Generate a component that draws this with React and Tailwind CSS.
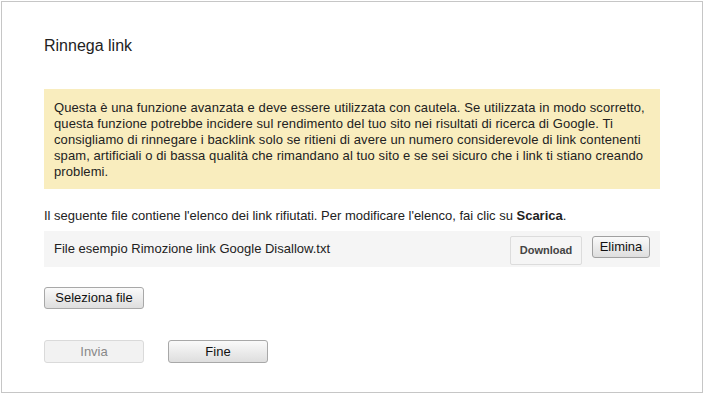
import React from 'react';

const App = () => {
  return (
    <div className="w-[705px] h-[395px] bg-white pl-px pt-px" style={{ fontFamily: '"Liberation Sans", Arial, sans-serif' }}>
      <div className="w-[702px] h-[392px] border border-[#c6c6c6] pl-[42px] pr-[42px] pt-[34px] text-[#222]">
        <h1 className="text-[16px] leading-[20px] font-normal text-[#222]">Rinnega link</h1>

        <div className="mt-[33px] w-[616px] h-[100px] bg-[#f9edbe] pl-[10px] pr-[6px] pt-[11px] text-[13px] leading-[16px] tracking-[0.09px] text-[#222]">
          Questa è una funzione avanzata e deve essere utilizzata con cautela. Se utilizzata in modo scorretto, questa funzione potrebbe incidere sul rendimento del tuo sito nei risultati di ricerca di Google. Ti consigliamo di rinnegare i backlink solo se ritieni di avere un numero considerevole di link contenenti spam, artificiali o di bassa qualità che rimandano al tuo sito e se sei sicuro che i link ti stiano creando problemi.
        </div>

        <p className="mt-[19px] text-[13px] leading-[16px]">
          Il seguente file contiene l'elenco dei link rifiutati. Per modificare l'elenco, fai clic su <b>Scarica</b>.
        </p>

        <div className="mt-[7px] w-[616px] h-[36px] bg-[#f5f5f5] flex items-center pl-[10px] pr-[10px]">
          <span className="text-[13px] flex-1">File esempio Rimozione link Google Disallow.txt</span>
          <button className="h-[29px] w-[72px] mt-[2px] rounded-[2px] border border-[#dcdcdc] bg-[#f5f5f5] text-[11px] font-bold text-[#444]">Download</button>
          <button className="ml-[10px] h-[22px] w-[58px] mb-[4px] rounded-[3px] border border-[#a0a0a0] bg-gradient-to-b from-[#fafafa] to-[#dedede] text-[13px] text-[#111]">Elimina</button>
        </div>

        <button className="mt-[20px] block h-[22px] w-[100px] rounded-[3px] border border-[#a8a8a8] bg-gradient-to-b from-[#fafafa] to-[#dedede] text-[13px] text-[#111]">Seleziona file</button>

        <div className="mt-[31px] flex gap-[24px]">
          <button className="h-[23px] w-[100px] rounded-[3px] border border-[#dadada] bg-[#f2f2f2] text-[13px] text-[#888]">Invia</button>
          <button className="h-[23px] w-[100px] rounded-[3px] border border-[#a8a8a8] bg-gradient-to-b from-[#fafafa] to-[#dedede] text-[13px] text-[#111]">Fine</button>
        </div>
      </div>
    </div>
  );
};

export default App;
